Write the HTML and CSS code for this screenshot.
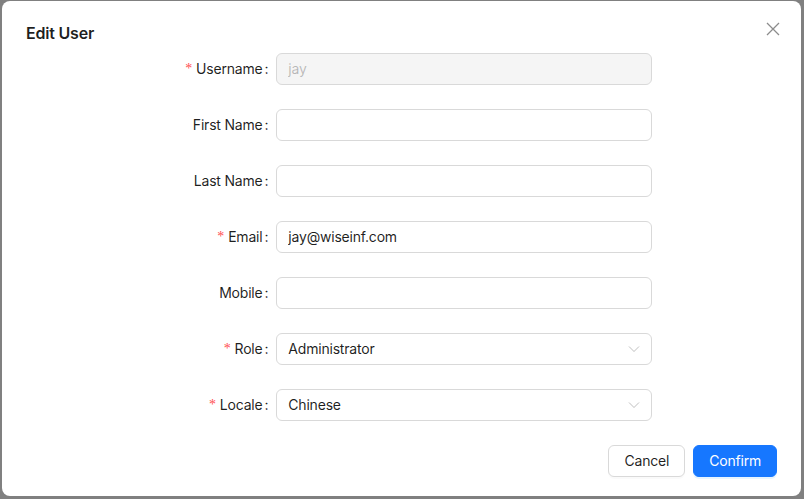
FILE: index.html
```html
<!DOCTYPE html>
<html>
<head>
<meta charset="utf-8">
<link rel="stylesheet" href="styles.css">
</head>
<body>
<div class="modal">
  <button class="close" aria-label="Close">
    <svg width="14" height="14" viewBox="0 0 14 14"><path d="M1 1 L13 13 M13 1 L1 13" stroke="currentColor" stroke-width="1.3" fill="none"/></svg>
  </button>
  <div class="title">Edit User</div>
  <form class="form">
    <div class="row">
      <label class="label"><span class="req">*</span>Username<span class="colon">:</span></label>
      <div class="field"><input class="input disabled" value="jay" disabled></div>
    </div>
    <div class="row">
      <label class="label">First Name<span class="colon">:</span></label>
      <div class="field"><input class="input" value=""></div>
    </div>
    <div class="row">
      <label class="label">Last Name<span class="colon">:</span></label>
      <div class="field"><input class="input" value=""></div>
    </div>
    <div class="row">
      <label class="label"><span class="req">*</span>Email<span class="colon">:</span></label>
      <div class="field"><input class="input" value="jay@wiseinf.com"></div>
    </div>
    <div class="row">
      <label class="label">Mobile<span class="colon">:</span></label>
      <div class="field"><input class="input" value=""></div>
    </div>
    <div class="row">
      <label class="label"><span class="req">*</span>Role<span class="colon">:</span></label>
      <div class="field"><div class="select"><span>Administrator</span>
        <svg class="arrow" width="12" height="12" viewBox="0 0 12 12"><path d="M1 3.5 L6 8.5 L11 3.5" stroke="currentColor" stroke-width="1" fill="none"/></svg></div></div>
    </div>
    <div class="row">
      <label class="label"><span class="req">*</span>Locale<span class="colon">:</span></label>
      <div class="field"><div class="select"><span>Chinese</span>
        <svg class="arrow" width="12" height="12" viewBox="0 0 12 12"><path d="M1 3.5 L6 8.5 L11 3.5" stroke="currentColor" stroke-width="1" fill="none"/></svg></div></div>
    </div>
  </form>
  <div class="footer">
    <button class="btn">Cancel</button>
    <button class="btn primary">Confirm</button>
  </div>
</div>
</body>
</html>
```
FILE: styles.css
```css
html, body { margin: 0; height: 100%; }
body {
  background: #808080;
  padding: 1px 3px 3px 2px;
  box-sizing: border-box;
  font-family: Inter, "Noto Sans", sans-serif;
  font-size: 14px;
  line-height: 22px;
  letter-spacing: -0.2px;
  color: rgba(0,0,0,0.88);
}
.modal {
  position: relative;
  background: #fff;
  border-radius: 8px;
  height: 495px;
  padding: 20px 24px;
  box-sizing: border-box;
  display: flex;
  flex-direction: column;
}
.close {
  position: absolute;
  top: 17px;
  right: 17px;
  width: 22px;
  height: 22px;
  border: 0;
  background: transparent;
  padding: 0;
  display: flex;
  align-items: center;
  justify-content: center;
  color: rgba(0,0,0,0.45);
}
.title {
  font-size: 16px;
  font-weight: 600;
  line-height: 24px;
  margin-bottom: 8px;
}
.form { display: flex; flex-direction: column; gap: 24px; margin: 0; }
.row { display: grid; grid-template-columns: 250.33px 375.5px; height: 32px; }
.label {
  display: flex;
  align-items: center;
  justify-content: flex-end;
  white-space: nowrap;
  padding-bottom: 1px;
}
.req {
  color: #ff4d4f;
  font-family: "Liberation Serif", serif;
  font-size: 14px;
  margin-right: 4px;
  line-height: 1;
}
.colon { margin: 0 8px 0 2px; }
.field { display: flex; }
.input {
  width: 100%;
  height: 32px;
  box-sizing: border-box;
  border: 1px solid #d9d9d9;
  border-radius: 6px;
  padding: 3px 11px 5px;
  font: inherit;
  line-height: 22px;
  letter-spacing: -0.2px;
  color: rgba(0,0,0,0.88);
  background: #fff;
  outline: none;
}
.input.disabled {
  background: rgba(0,0,0,0.04);
  color: rgba(0,0,0,0.25);
}
.select {
  width: 100%;
  height: 32px;
  box-sizing: border-box;
  border: 1px solid #d9d9d9;
  border-radius: 6px;
  padding: 0 11px 1px;
  display: flex;
  align-items: center;
  justify-content: space-between;
}
.arrow { color: rgba(0,0,0,0.25); margin-top: 1px; }
.footer {
  margin-top: 24px;
  display: flex;
  justify-content: flex-end;
  gap: 8px;
}
.btn {
  height: 32px;
  padding: 4px 15px;
  border-radius: 6px;
  border: 1px solid #d9d9d9;
  background: #fff;
  font: inherit;
  line-height: 22px;
  letter-spacing: -0.2px;
  color: rgba(0,0,0,0.88);
  box-shadow: 0 2px 0 rgba(0,0,0,0.02);
}
.btn.primary {
  background: #1677ff;
  border-color: #1677ff;
  color: #fff;
  box-shadow: 0 2px 0 rgba(5,145,255,0.1);
}
```
